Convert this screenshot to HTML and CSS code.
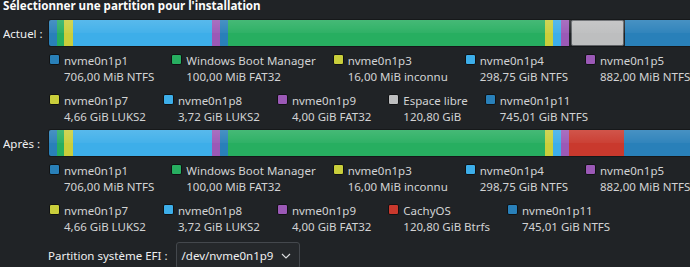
FILE: index.html
```html
<!DOCTYPE html>
<html lang="fr">
<head>
    <meta charset="UTF-8">
    <title>Partitionnement</title>
    <link rel="stylesheet" href="styles.css">
</head>
<body>
    <h1 class="title">Sélectionner une partition pour l'installation</h1>

    <div class="row">
        <div class="row-label">Actuel :</div>
        <div class="bar">
            <div class="seg blue" style="width:8px"></div>
            <div class="seg green" style="width:7px"></div>
            <div class="seg yellow" style="width:9px"></div>
            <div class="seg sky" style="width:139px"></div>
            <div class="seg purple" style="width:8px"></div>
            <div class="seg blue" style="width:8px"></div>
            <div class="seg green" style="width:317px"></div>
            <div class="seg yellow" style="width:8px"></div>
            <div class="seg sky" style="width:8px"></div>
            <div class="seg purple" style="width:8px"></div>
            <div class="seg free" style="width:53px"></div>
            <div class="seg blue" style="width:120px"></div>
        </div>
    </div>

    <div class="legend">
        <div class="legend-row">
            <div class="item"><span class="sq blue"></span><div><div>nvme0n1p1</div><div>706,00 MiB NTFS</div></div></div>
            <div class="item"><span class="sq green"></span><div><div>Windows Boot Manager</div><div>100,00 MiB FAT32</div></div></div>
            <div class="item"><span class="sq yellow"></span><div><div>nvme0n1p3</div><div>16,00 MiB inconnu</div></div></div>
            <div class="item"><span class="sq sky"></span><div><div>nvme0n1p4</div><div>298,75 GiB NTFS</div></div></div>
            <div class="item"><span class="sq purple"></span><div><div>nvme0n1p5</div><div>882,00 MiB NTFS</div></div></div>
        </div>
        <div class="legend-row">
            <div class="item"><span class="sq yellow"></span><div><div>nvme0n1p7</div><div>4,66 GiB LUKS2</div></div></div>
            <div class="item"><span class="sq sky"></span><div><div>nvme0n1p8</div><div>3,72 GiB LUKS2</div></div></div>
            <div class="item"><span class="sq purple"></span><div><div>nvme0n1p9</div><div>4,00 GiB FAT32</div></div></div>
            <div class="item"><span class="sq free"></span><div><div>Espace libre</div><div>120,80 GiB</div></div></div>
            <div class="item"><span class="sq blue"></span><div><div>nvme0n1p11</div><div>745,01 GiB NTFS</div></div></div>
        </div>
    </div>

    <div class="row after">
        <div class="row-label">Après :</div>
        <div class="bar">
            <div class="seg blue" style="width:8px"></div>
            <div class="seg green" style="width:7px"></div>
            <div class="seg yellow" style="width:9px"></div>
            <div class="seg sky" style="width:139px"></div>
            <div class="seg purple" style="width:8px"></div>
            <div class="seg blue" style="width:8px"></div>
            <div class="seg green" style="width:317px"></div>
            <div class="seg yellow" style="width:8px"></div>
            <div class="seg sky" style="width:8px"></div>
            <div class="seg purple" style="width:8px"></div>
            <div class="seg red" style="width:55px"></div>
            <div class="seg blue" style="width:120px"></div>
        </div>
    </div>

    <div class="legend">
        <div class="legend-row">
            <div class="item"><span class="sq blue"></span><div><div>nvme0n1p1</div><div>706,00 MiB NTFS</div></div></div>
            <div class="item"><span class="sq green"></span><div><div>Windows Boot Manager</div><div>100,00 MiB FAT32</div></div></div>
            <div class="item"><span class="sq yellow"></span><div><div>nvme0n1p3</div><div>16,00 MiB inconnu</div></div></div>
            <div class="item"><span class="sq sky"></span><div><div>nvme0n1p4</div><div>298,75 GiB NTFS</div></div></div>
            <div class="item"><span class="sq purple"></span><div><div>nvme0n1p5</div><div>882,00 MiB NTFS</div></div></div>
        </div>
        <div class="legend-row">
            <div class="item"><span class="sq yellow"></span><div><div>nvme0n1p7</div><div>4,66 GiB LUKS2</div></div></div>
            <div class="item"><span class="sq sky"></span><div><div>nvme0n1p8</div><div>3,72 GiB LUKS2</div></div></div>
            <div class="item"><span class="sq purple"></span><div><div>nvme0n1p9</div><div>4,00 GiB FAT32</div></div></div>
            <div class="item"><span class="sq red"></span><div><div>CachyOS</div><div>120,80 GiB Btrfs</div></div></div>
            <div class="item"><span class="sq blue"></span><div><div>nvme0n1p11</div><div>745,01 GiB NTFS</div></div></div>
        </div>
    </div>

    <div class="efi">
        <span>Partition système EFI :</span>
        <div class="combo">
            <span>/dev/nvme0n1p9</span>
            <svg width="10" height="6" viewBox="0 0 10 6"><path d="M1 1 L5 5 L9 1" fill="none" stroke="#dcdddf" stroke-width="1.2"/></svg>
        </div>
    </div>
</body>
</html>
```

FILE: styles.css
```css
body {
    margin: 0;
    padding: 0 0 0 3px;
    background: #202326;
    color: #eff0f1;
    font-family: 'Noto Sans', 'Open Sans', sans-serif;
    font-size: 11.5px;
    overflow: hidden;
    height: 267px;
}
.title {
    font-size: 11.6px;
    font-weight: bold;
    line-height: 14px;
    margin: -1px 0 0 0;
    color: #fcfcfc;
}
.row {
    display: flex;
    align-items: center;
    margin-top: 6px;
    overflow: hidden;
}
.row.after {
    margin-top: 4px;
}
.row-label {
    width: 45px;
    flex-shrink: 0;
}
.bar {
    display: flex;
    height: 28px;
    border: 1px solid #16181a;
    border-right: none;
    border-radius: 3px 0 0 3px;
    box-sizing: border-box;
    overflow: hidden;
    position: relative;
    flex: 1;
}
.bar::after {
    content: "";
    position: absolute;
    inset: 0;
    background: linear-gradient(to bottom, rgba(255,255,255,0.14), rgba(255,255,255,0.04) 50%, rgba(0,0,0,0) 50%);
}
.seg {
    flex-shrink: 0;
    height: 100%;
    box-sizing: border-box;
}
.seg.free {
    border: 1px solid #5f6266;
    border-radius: 2px;
    margin: 0 1px 0 2px;
}
.blue { background: #2980b9; }
.green { background: #27ae60; }
.yellow { background: #c9ce3b; }
.sky { background: #3daee9; }
.purple { background: #9b59b6; }
.free { background: #bdbebf; }
.red { background: #c9392d; }

.legend {
    margin: 6px 0 0 46px;
    color: #d2d3d4;
    line-height: 16px;
    overflow: hidden;
}
.legend-row {
    display: flex;
    gap: 17px;
    margin-bottom: 8px;
    white-space: nowrap;
}
.legend-row:last-child {
    margin-bottom: 0;
}
.item {
    display: flex;
    gap: 4px;
    flex-shrink: 0;
}
.sq {
    width: 11px;
    height: 11px;
    box-sizing: border-box;
    border: 1px solid #101214;
    border-radius: 2px;
    margin-top: 1px;
    flex-shrink: 0;
}
.efi {
    display: flex;
    align-items: center;
    gap: 8px;
    margin: 7px 0 0 45px;
}
.combo {
    display: flex;
    align-items: center;
    justify-content: space-between;
    width: 124px;
    height: 27px;
    box-sizing: border-box;
    padding: 0 8px 0 5px;
    border: 1px solid #44484d;
    border-radius: 3px;
    background: #25282b;
}
```
